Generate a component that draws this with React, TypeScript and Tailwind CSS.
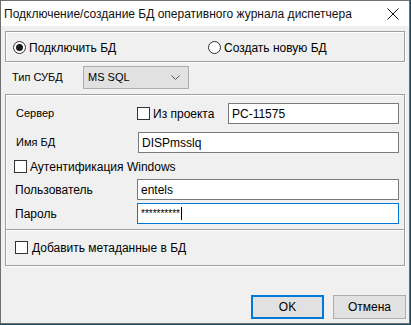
import React from "react";

const Radio = ({ checked }: { checked?: boolean }) => (
  <span className="w-[13px] h-[13px] rounded-full border border-[#333] bg-white flex items-center justify-center shrink-0">
    {checked && <span className="w-[7px] h-[7px] rounded-full bg-[#1a1a1a]" />}
  </span>
);

const Check = () => (
  <span className="w-[13px] h-[13px] border border-[#333] bg-white shrink-0" />
);

export default function App() {
  return (
    <div
      className="w-[411px] h-[325px] bg-[#1c4a5e] text-black"
      style={{ fontFamily: '"Liberation Sans", Arial, sans-serif' }}
    >
      <div className="w-[410px] h-[324px] border border-[#6e6e6e] bg-[#f0f0f0] flex flex-col">
        {/* title bar */}
        <div className="h-[25px] bg-white flex items-center justify-between pl-[3px] pr-[9px] shrink-0">
          <span className="text-[12px] leading-none text-[#111]">
            Подключение/создание БД оперативного журнала диспетчера
          </span>
          <svg width="12" height="12" viewBox="0 0 12 12" className="mr-[1px]">
            <path d="M0.5 0.5 L11.5 11.5 M11.5 0.5 L0.5 11.5" stroke="#111" strokeWidth="1" />
          </svg>
        </div>

        {/* radio group */}
        <div className="mt-[5px] ml-[4px] w-[400px] h-[31px] border border-[#a0a0a0] shadow-[inset_1px_1px_0_#fff,1px_1px_0_#fff] flex items-center pt-[2px] pl-[7px] text-[12px]">
          <div className="flex items-center gap-[3px] w-[195px]">
            <Radio checked />
            <span>Подключить БД</span>
          </div>
          <div className="flex items-center gap-[3px]">
            <Radio />
            <span>Создать новую БД</span>
          </div>
        </div>

        {/* DB type row */}
        <div className="mt-[4px] flex items-center h-[23px] pl-[11px] text-[11px]">
          <span className="w-[71px]">Тип СУБД</span>
          <div className="w-[106px] h-[23px] bg-[#e1e1e1] border border-[#adadad] flex items-center justify-between pl-[4px] pr-[8px]">
            <span className="text-[11px]">MS SQL</span>
            <svg width="9" height="5" viewBox="0 0 9 5">
              <path d="M0.5 0.5 L4.5 4.5 L8.5 0.5" stroke="#555" fill="none" strokeWidth="1" />
            </svg>
          </div>
        </div>

        {/* connection group */}
        <div className="mt-[5px] ml-[4px] w-[400px] h-[172px] border border-[#a0a0a0] shadow-[inset_1px_1px_0_#fff,1px_1px_0_#fff] flex flex-col text-[11px]">
          <div className="flex items-center mt-[8px] h-[21px] pl-[10px] pr-[5px]">
            <span className="w-[121px]">Сервер</span>
            <Check />
            <span className="ml-[3px] text-[12px] w-[75px]">Из проекта</span>
            <div className="flex-1 h-[21px] bg-white border border-[#7a7a7a] flex items-center pl-[3px] text-[12px]">
              PC-11575
            </div>
          </div>
          <div className="flex items-center mt-[8px] h-[21px] pl-[10px] pr-[5px]">
            <span className="w-[122px]">Имя БД</span>
            <div className="flex-1 h-[21px] bg-white border border-[#7a7a7a] flex items-center pl-[3px] text-[12px]">
              DISPmsslq
            </div>
          </div>
          <div className="flex items-center mt-[6px] h-[15px] pl-[8px] gap-[3px] text-[12px]">
            <Check />
            <span>Аутентификация Windows</span>
          </div>
          <div className="flex items-center mt-[5px] h-[21px] pl-[9px] pr-[5px] text-[12px]">
            <span className="w-[122px]">Пользователь</span>
            <div className="flex-1 h-[21px] bg-white border border-[#7a7a7a] flex items-center pl-[3px]">
              entels
            </div>
          </div>
          <div className="flex items-center mt-[3px] h-[21px] pl-[9px] pr-[5px] text-[12px]">
            <span className="w-[122px]">Пароль</span>
            <div className="flex-1 h-[21px] bg-white border border-[#0078d7] flex items-center pl-[3px]">
              <span className="text-[10px] tracking-[0px] leading-none">**********</span>
              <span className="w-[1px] h-[13px] bg-black ml-[1px]" />
            </div>
          </div>
          <div className="mt-[5px] h-[2px] border-t border-[#a0a0a0] border-b border-b-white" />
          <div className="flex items-center mt-[9px] h-[15px] pl-[9px] gap-[4px] text-[12px]">
            <Check />
            <span>Добавить метаданные в БД</span>
          </div>
        </div>

        {/* buttons */}
        <div className="mt-[29px] flex justify-end gap-[9px] pr-[3px] text-[12px]">
          <div className="w-[73px] h-[24px] bg-[#e1e1e1] border-2 border-[#0078d7] flex items-center justify-center">
            OK
          </div>
          <div className="w-[73px] h-[24px] bg-[#e1e1e1] border border-[#adadad] flex items-center justify-center">
            Отмена
          </div>
        </div>
      </div>
    </div>
  );
}
